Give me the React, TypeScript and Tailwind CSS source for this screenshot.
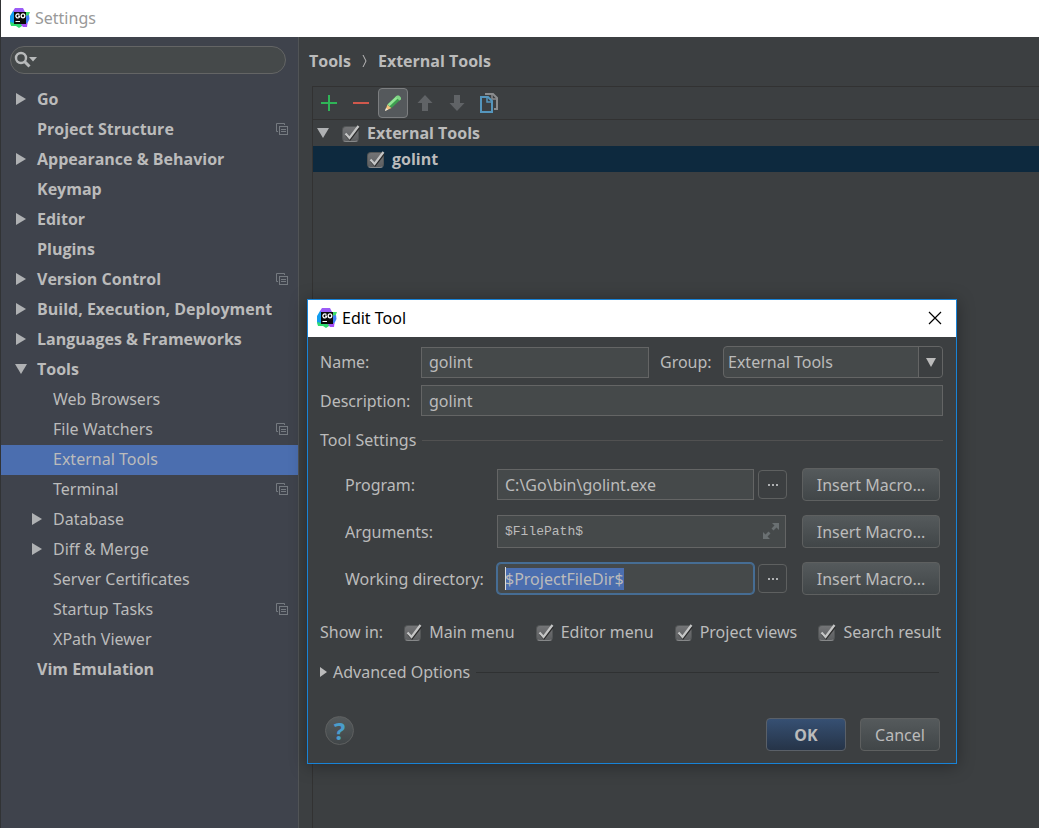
import { useEffect, useRef } from "react";
import type { ReactNode } from "react";

type NavItem = {
  label: string;
  level: 0 | 1;
  state?: "open" | "closed";
  project?: boolean;
  selected?: boolean;
};

const navItems: NavItem[] = [
  { label: "Go", level: 0, state: "closed" },
  { label: "Project Structure", level: 0, project: true },
  { label: "Appearance & Behavior", level: 0, state: "closed" },
  { label: "Keymap", level: 0 },
  { label: "Editor", level: 0, state: "closed" },
  { label: "Plugins", level: 0 },
  { label: "Version Control", level: 0, state: "closed", project: true },
  { label: "Build, Execution, Deployment", level: 0, state: "closed" },
  { label: "Languages & Frameworks", level: 0, state: "closed" },
  { label: "Tools", level: 0, state: "open" },
  { label: "Web Browsers", level: 1 },
  { label: "File Watchers", level: 1, project: true },
  { label: "External Tools", level: 1, selected: true },
  { label: "Terminal", level: 1, project: true },
  { label: "Database", level: 1, state: "closed" },
  { label: "Diff & Merge", level: 1, state: "closed" },
  { label: "Server Certificates", level: 1 },
  { label: "Startup Tasks", level: 1, project: true },
  { label: "XPath Viewer", level: 1 },
  { label: "Vim Emulation", level: 0 },
];

function GoLogo() {
  return (
    <svg width="20" height="20" viewBox="0 0 20 20" className="shrink-0" aria-hidden="true">
      <path d="M5 0h8l2 4-4 6H3L3 3z" fill="#9b5cf6" />
      <path d="M13 4h7l-2 5v4l-4 1z" fill="#3ddc6b" />
      <path d="M15 8l4-1 .5 4-2.500 5-4-2z" fill="#3f7df5" />
      <path d="M0 8l3-5 2 2v10l-4 2-1-3z" fill="#129df0" />
      <path d="M0 14l4 1 4 1 4-1v3l-3 2-3-2H1z" fill="#2fdc6f" />
      <path d="M10 15h7.500L17 19h-4z" fill="#a44ff5" />
      <rect x="4" y="4" width="12" height="12" fill="#0a0a0a" />
      <path d="M9.400 6.600A2 2 0 1 0 9.500 9V8.200H8" fill="none" stroke="#fff" strokeWidth="1.300" />
      <ellipse cx="13" cy="7.800" rx="1.800" ry="2" fill="none" stroke="#fff" strokeWidth="1.300" />
      <path d="M5.500 13.500h4.500" stroke="#fff" strokeWidth="1" />
    </svg>
  );
}

function Arrow({ open }: { open: boolean }) {
  return (
    <svg width="12" height="12" viewBox="0 0 12 12" className="shrink-0" fill="#afb1b3" aria-hidden="true">
      {open ? <path d="M0 1h12L6 11z" /> : <path d="M1 0v12l10-6z" />}
    </svg>
  );
}

function ProjectIcon() {
  return (
    <svg width="12" height="12" viewBox="0 0 12 12" fill="none" stroke="#757a80" aria-hidden="true">
      <path d="M8.500 2V.5h-8v8H2" />
      <rect x="3.500" y="3.500" width="8" height="8" />
      <path d="M5 6.500h5M5 8.500h5" />
    </svg>
  );
}

function Check({ id, children, bold }: { id: string; children: ReactNode; bold?: boolean }) {
  return (
    <label htmlFor={id} className={bold ? "flex items-center gap-1.5 font-bold" : "flex items-center gap-1.5"}>
      <span className="relative flex h-5 w-5 shrink-0">
        <input
          id={id}
          type="checkbox"
          defaultChecked
          className="peer mt-[3px] ml-px h-4 w-[17px] appearance-none rounded-sm border border-[#535657] border-b-[#868889] bg-linear-to-b from-[#737476] to-[#5c5e60]"
        />
        <svg
          width="20"
          height="20"
          viewBox="0 0 20 20"
          fill="none"
          className="pointer-events-none invisible absolute inset-0 peer-checked:visible"
          aria-hidden="true"
        >
          <path d="M5 12l4 4.500L18 5" stroke="#2b2b2b" strokeWidth="2" />
          <path d="M4.500 10.500L8.500 15 17.500 3" stroke="#c4c5c5" strokeWidth="2.200" />
        </svg>
      </span>
      {children}
    </label>
  );
}

const fieldClass = "min-w-0 border border-[#646565] bg-[#45494a] px-[7px] text-[#bbbbbb] outline-none";
const buttonClass =
  "h-[33px] shrink-0 rounded border border-[#5e6060] bg-linear-to-b from-[#555a5c] to-[#414648] text-center";

function MacroButton() {
  return (
    <button type="button" className={`${buttonClass} w-[138px]`}>
      Insert Macro...
    </button>
  );
}

function BrowseButton({ label }: { label: string }) {
  return (
    <button
      type="button"
      aria-label={label}
      className="flex h-[29px] w-[29px] shrink-0 items-center justify-center rounded-sm border border-[#5e6060]"
    >
      <svg width="10" height="2" viewBox="0 0 10 2" fill="#afb1b3" aria-hidden="true">
        <path d="M0 0h2v2H0zM4 0h2v2H4zM8 0h2v2H8z" />
      </svg>
    </button>
  );
}

function Sidebar() {
  return (
    <aside className="w-[298px] shrink-0 border-r border-[#515456] bg-[#3f434c]">
      <div className="relative mt-[9px] mr-3 ml-[9px] flex">
        <input
          type="search"
          aria-label="Search settings"
          className="h-7 w-full appearance-none rounded-full border border-[#646565] bg-[#45494a] pr-3 pl-8 outline-none"
        />
        <svg
          width="24"
          height="18"
          viewBox="0 0 24 18"
          className="pointer-events-none absolute top-[5px] left-1"
          fill="none"
          aria-hidden="true"
        >
          <circle cx="7" cy="7" r="5" stroke="#b8babb" strokeWidth="2.400" />
          <path d="M10.500 10.500l5 5" stroke="#b8babb" strokeWidth="3" />
          <path d="M15 6h8l-4 4.500z" fill="#b8babb" />
        </svg>
      </div>
      <nav aria-label="Settings sections">
        <ul className="mt-[11px]">
          {navItems.map((item) => (
            <li key={item.label}>
              <a
                href="#"
                aria-current={item.selected ? "page" : undefined}
                className={`flex h-[30px] items-center pr-[10px] pb-0.5 ${item.level === 0 ? "pl-[14px] font-['Open_Sans',sans-serif] font-bold" : "pl-[30px]"} ${item.selected ? "bg-[#4b6eaf]" : ""}`}
              >
                <span className="flex w-[22px] shrink-0">{item.state && <Arrow open={item.state === "open"} />}</span>
                <span className="flex-1 whitespace-nowrap">{item.label}</span>
                {item.project && <ProjectIcon />}
              </a>
            </li>
          ))}
        </ul>
      </nav>
    </aside>
  );
}

function Toolbar() {
  const item = "flex h-[30px] w-[30px] items-center justify-center";
  return (
    <div className="flex h-[33px] items-center gap-0.5 border-b border-[#323232] pl-px">
      <button type="button" aria-label="Add" className={item}>
        <svg width="16" height="16" viewBox="0 0 16 16" fill="none" stroke="#2fb457" strokeWidth="2">
          <path d="M8 0v16M0 8h16" />
        </svg>
      </button>
      <button type="button" aria-label="Remove" className={item}>
        <svg width="16" height="16" viewBox="0 0 16 16" fill="none" stroke="#d0584c" strokeWidth="2">
          <path d="M0 8h16" />
        </svg>
      </button>
      <button type="button" aria-label="Edit" className={`${item} rounded-sm border border-[#7c7e80] bg-[#55595c]`}>
        <svg width="18" height="18" viewBox="0 0 18 18">
          <path d="M1 17l2.500-6.500 4 3.500z" fill="#f3c27c" />
          <path d="M1 17l1-3 2 1.500z" fill="#e8e8e8" />
          <path d="M3.500 10.500L12.500 2l4 3.500-9 8.500z" fill="#3f9f50" />
          <path d="M3.500 10.500L12.500 2l2 1.700-9 8.500z" fill="#93e595" />
          <path d="M11.500 3L13 1.500h2L17 3.500v2L15.500 6.500z" fill="#7fd685" />
        </svg>
      </button>
      <button type="button" aria-label="Move up" className={item}>
        <svg width="16" height="16" viewBox="0 0 16 16" fill="#606366">
          <path d="M8 0l7.500 8H11v8H5V8H.5z" />
        </svg>
      </button>
      <button type="button" aria-label="Move down" className={item}>
        <svg width="16" height="16" viewBox="0 0 16 16" fill="#606366">
          <path d="M8 16l7.500-8H11V0H5v8H.5z" />
        </svg>
      </button>
      <button type="button" aria-label="Copy" className={item}>
        <svg width="20" height="20" viewBox="0 0 20 20" fill="none" strokeWidth="2">
          <path d="M6 1h8l4 4v11h-3" stroke="#8a8c8e" />
          <path d="M13 1v5h5" stroke="#8a8c8e" strokeWidth="1.500" />
          <path d="M2 4h7l4 4v11H2z" stroke="#5596bd" fill="#3c3f41" />
          <path d="M8 4v5h5" stroke="#5596bd" strokeWidth="1.500" />
        </svg>
      </button>
    </div>
  );
}

function EditToolDialog() {
  const workingDir = useRef<HTMLInputElement>(null);
  useEffect(() => {
    workingDir.current?.focus();
    workingDir.current?.select();
  }, []);

  return (
    <section
      role="dialog"
      aria-label="Edit Tool"
      className="absolute top-[299px] left-[306px] w-[650px] border border-[#1883d7] bg-[#3c3f41] shadow-[0_2px_16px_rgba(0,0,0,0.35)]"
    >
      <header className="flex h-[37px] items-center gap-[5px] bg-white pr-[14px] pb-0.5 pl-[9px] text-black">
        <GoLogo />
        <h2 className="flex-1">Edit Tool</h2>
        <button type="button" aria-label="Close">
          <svg width="14" height="14" viewBox="0 0 14 14" stroke="#000" strokeWidth="1.200">
            <path d="M1 1l12 12M13 1L1 13" />
          </svg>
        </button>
      </header>

      <form className="pr-[13px] pb-3 pl-3" onSubmit={(e) => e.preventDefault()}>
        <div className="mt-[9px] flex items-center">
          <label htmlFor="name" className="w-[101px] shrink-0">
            Name:
          </label>
          <input id="name" defaultValue="golint" className={`${fieldClass} h-[31px] flex-1`} />
          <label htmlFor="group" className="ml-[11px] w-[63px] shrink-0">
            Group:
          </label>
          <span className="relative flex w-[220px] shrink-0">
            <select
              id="group"
              className="h-8 w-full appearance-none rounded border border-[#646565] bg-[#45494a] pl-1 outline-none"
            >
              <option>External Tools</option>
            </select>
            <span className="pointer-events-none absolute inset-y-px right-px flex w-6 items-center justify-center rounded-r border-l border-[#646565] bg-[#3c3f41]">
              <svg width="10" height="9" viewBox="0 0 10 9" fill="#bbbbbb" aria-hidden="true">
                <path d="M0 0h10L5 9z" />
              </svg>
            </span>
          </span>
        </div>

        <div className="mt-[7px] flex items-center">
          <label htmlFor="description" className="w-[101px] shrink-0">
            Description:
          </label>
          <input id="description" defaultValue="golint" className={`${fieldClass} h-[31px] flex-1`} />
        </div>

        <fieldset className="mt-3">
          <legend className="flex w-full items-center gap-1.5">
            Tool Settings
            <span className="h-px flex-1 bg-[#515151]" />
          </legend>
          <div className="mt-4 flex flex-col gap-[14px] pr-[3px] pl-[25px]">
            <div className="flex items-center">
              <label htmlFor="program" className="w-[152px] shrink-0">
                Program:
              </label>
              <input id="program" defaultValue="C:\Go\bin\golint.exe" className={`${fieldClass} mr-1 h-[31px] flex-1`} />
              <BrowseButton label="Browse for program" />
              <span className="w-[15px]" />
              <MacroButton />
            </div>
            <div className="flex items-center">
              <label htmlFor="arguments" className="w-[152px] shrink-0">
                Arguments:
              </label>
              <span className="relative mr-4 flex flex-1">
                <input
                  id="arguments"
                  defaultValue="$FilePath$"
                  className={`${fieldClass} h-[33px] w-full font-['Liberation_Mono',monospace] text-[13px]`}
                />
                <svg
                  width="16"
                  height="16"
                  viewBox="0 0 16 16"
                  className="pointer-events-none absolute top-2 right-[7px]"
                  fill="#6a7072"
                  aria-hidden="true"
                >
                  <path d="M9 0h7v7l-2.500-2.500-3 3-2-2 3-3zM0 9l2.500 2.500 3-3 2 2-3 3L7 16H0z" />
                </svg>
              </span>
              <MacroButton />
            </div>
            <div className="flex items-center">
              <label htmlFor="workdir" className="w-[152px] shrink-0 whitespace-nowrap">
                Working directory:
              </label>
              <span className="relative mr-1 flex flex-1">
                <input
                  id="workdir"
                  ref={workingDir}
                  defaultValue="$ProjectFileDir$"
                  className="h-[31px] w-full rounded-sm border border-[#466d94] bg-[#45494a] px-[7px] ring-1 ring-[#466d94] outline-none selection:bg-[#4b6eaf] selection:text-[#bbbbbb]"
                />
                <span className="pointer-events-none absolute inset-y-1 left-2 w-px bg-[#dddddd]" />
              </span>
              <BrowseButton label="Browse for working directory" />
              <span className="w-[15px]" />
              <MacroButton />
            </div>
          </div>
        </fieldset>

        <div className="mt-[25px] flex items-center justify-between pr-0.5 whitespace-nowrap">
          <span>Show in:</span>
          <Check id="main-menu">Main menu</Check>
          <Check id="editor-menu">Editor menu</Check>
          <Check id="project-views">Project views</Check>
          <Check id="search-result">Search result</Check>
        </div>

        <button type="button" className="mt-4 flex w-full items-center gap-1.5 pr-1">
          <svg width="7" height="10" viewBox="0 0 7 10" fill="#bbbbbb" aria-hidden="true">
            <path d="M0 0v10l7-5z" />
          </svg>
          Advanced Options
          <span className="h-px flex-1 bg-[#2f3132]" />
        </button>

        <div className="mt-8 flex items-start justify-between pr-[3px] pl-[5px]">
          <button
            type="button"
            aria-label="Help"
            className="h-[29px] w-[29px] rounded-full border border-[#5e6060] bg-linear-to-b from-[#555a5c] to-[#414648] text-2xl leading-6 font-bold text-[#4a9dcb]"
          >
            ?
          </button>
          <div className="mt-0.5 flex gap-[14px]">
            <button
              type="submit"
              className="h-[33px] w-20 rounded border border-[#5a6068] bg-linear-to-b from-[#365073] to-[#263448] font-bold"
            >
              OK
            </button>
            <button type="button" className={`${buttonClass} w-20`}>
              Cancel
            </button>
          </div>
        </div>
      </form>
    </section>
  );
}

export default function App() {
  return (
    <div className="relative flex min-h-screen flex-col overflow-hidden border-l border-[#313335] bg-[#3c3f41] font-['Noto_Sans',sans-serif] text-base leading-6 text-[#bbbbbb]">
      <header className="flex h-[37px] items-center gap-[5px] bg-white pb-0.5 pl-[9px] text-[#999999]">
        <GoLogo />
        <h1>Settings</h1>
      </header>
      <div className="flex flex-1">
        <Sidebar />
        <main className="flex min-w-0 flex-1 flex-col font-['Open_Sans',sans-serif]">
          <h2 className="flex h-[49px] items-center gap-[11px] pb-px pl-[10px] font-bold">
            Tools
            <svg width="5" height="12" viewBox="0 0 5 12" fill="none" stroke="#bbbbbb" aria-hidden="true">
              <path d="M1 0l3 6-3 6" />
            </svg>
            External Tools
          </h2>
          <div className="ml-[13px] flex-1 border-t border-l border-[#323232]">
            <Toolbar />
            <ul>
              <li className="flex h-[26px] items-center gap-3 pl-1">
                <Arrow open />
                <Check id="all-tools" bold>
                  External Tools
                </Check>
              </li>
              <li className="flex h-[26px] items-center bg-[#0d293e] pl-[53px]">
                <Check id="golint" bold>
                  golint
                </Check>
              </li>
            </ul>
          </div>
        </main>
      </div>
      <EditToolDialog />
    </div>
  );
}
